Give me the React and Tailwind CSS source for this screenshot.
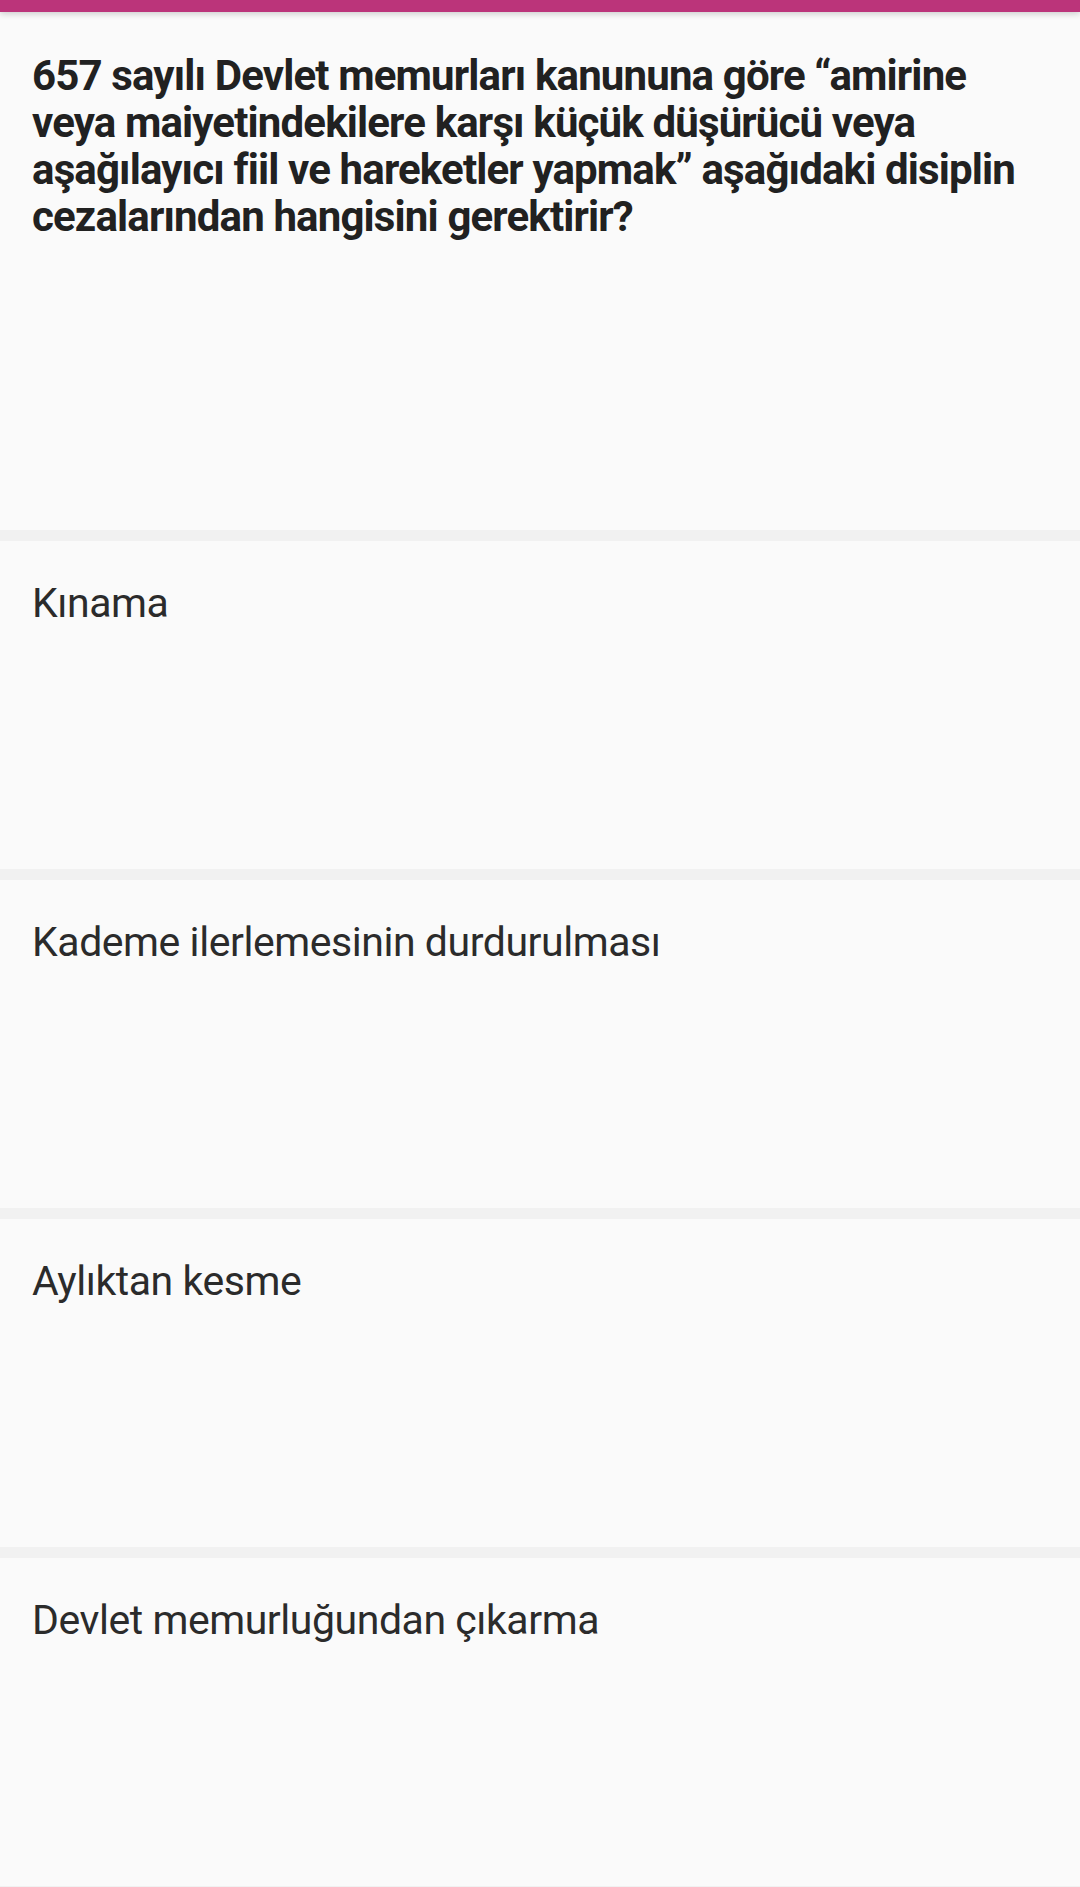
export default function App() {
  const options = [
    "Kınama",
    "Kademe ilerlemesinin durdurulması",
    "Aylıktan kesme",
    "Devlet memurluğundan çıkarma",
  ];
  return (
    <div
      className="w-[1080px] h-[1887px] overflow-hidden bg-[#f1f1f1] flex flex-col"
      style={{ fontFamily: "Roboto, 'Noto Sans', sans-serif" }}
    >
      <div className="h-[12px] shrink-0 bg-[#bb347a] shadow-[0_2px_6px_rgba(0,0,0,0.18)] relative z-10" />
      <div className="h-[518px] shrink-0 bg-[#fafafa] px-[32px] pt-[40px]">
        <p className="text-[42px] leading-[47px] font-bold text-[#212121] tracking-[-0.85px]">
          657 sayılı Devlet memurları kanununa göre “amirine veya maiyetindekilere karşı küçük düşürücü veya aşağılayıcı fiil ve hareketler yapmak” aşağıdaki disiplin cezalarından hangisini gerektirir?
        </p>
      </div>
      {options.map((o, i) => (
        <div
          key={i}
          className="mt-[11px] h-[328px] shrink-0 bg-[#fafafa] px-[32px] pt-[38px]"
        >
          <p className="text-[41px] leading-[48px] text-[#2b2b2b] tracking-[-0.45px]">{o}</p>
        </div>
      ))}
    </div>
  );
}
